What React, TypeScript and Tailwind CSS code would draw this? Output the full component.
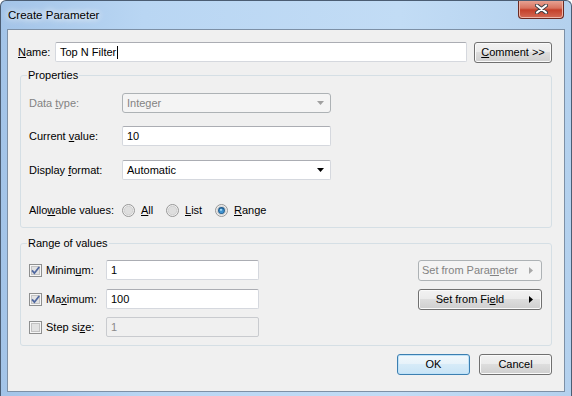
import React from 'react';

const U = ({ c }: { c: string }) => <span className="underline underline-offset-1">{c}</span>;

const btnNormal =
  'border border-[#707070] rounded-[3px] bg-[linear-gradient(to_bottom,#f2f2f2_0%,#ebebeb_48%,#dddddd_50%,#cfcfcf_100%)] shadow-[inset_0_0_0_1px_#fafafa]';
const btnDisabled = 'border border-[#adb2b5] rounded-[3px] bg-[#f4f4f4] text-[#838383]';
const btnFocused =
  'border border-[#3c7fb1] rounded-[3px] bg-[linear-gradient(to_bottom,#f2f8fc_0%,#e6f2fa_48%,#d6ebf8_50%,#c9e4f6_100%)] shadow-[inset_0_0_0_1px_#bfe2f8]';
const textBox = 'h-[20px] flex items-center bg-white pl-[4px] border border-[#d5d8de] border-t-[#abadb3] rounded-[2px]';

function Checkbox({ checked }: { checked?: boolean }) {
  return (
    <svg width="13" height="13" viewBox="0 0 13 13" className="shrink-0">
      <rect x="0.5" y="0.5" width="12" height="12" fill="#f6f6f6" stroke="#8e8f8f" />
      <rect x="2.5" y="2.5" width="8" height="8" fill="#e2e2e2" stroke="#c2c2c2" />
      {checked && <path d="M3 6.4 L5.4 9.2 L10.2 3" stroke="#5068a0" strokeWidth="1.8" fill="none" />}
    </svg>
  );
}

function Radio({ checked }: { checked?: boolean }) {
  return (
    <svg width="13" height="13" viewBox="0 0 13 13" className="shrink-0">
      <circle cx="6.5" cy="6.5" r="6" fill="#f0f0f0" stroke="#979797" />
      <circle cx="6.5" cy="6.5" r="4.3" fill="#dedede" stroke="#cacaca" strokeWidth="0.8" />
      {checked && (
        <>
          <circle cx="6.5" cy="6.5" r="3.4" fill="#1d5a8c" />
          <circle cx="6.5" cy="6.9" r="2.4" fill="#3f92cf" />
          <circle cx="6" cy="5.8" r="1.1" fill="#a9dcf7" />
        </>
      )}
    </svg>
  );
}

const Arrow = ({ color }: { color: string }) => (
  <svg width="8" height="4" viewBox="0 0 8 4">
    <path d="M0 0 H7 L3.5 4 Z" fill={color} />
  </svg>
);

const RightArrow = ({ color }: { color: string }) => (
  <svg width="4" height="7" viewBox="0 0 4 7">
    <path d="M0 0 L4 3.5 L0 7 Z" fill={color} />
  </svg>
);

export default function App() {
  return (
    <div className="w-[572px] h-[396px] overflow-hidden flex flex-col rounded-t-[6px] border border-b-0 border-[#4b5d73] bg-[linear-gradient(to_right,#a3c4e8_0%,#b9d6f3_25%,#c2dcf5_70%,#b4d1ee_100%)] font-['Liberation_Sans',Arial,sans-serif] text-[11px] text-black">
      {/* Title bar */}
      <div className="h-[28px] flex items-start justify-between shrink-0">
        <div className="pl-[7px] pt-[6px] text-[11.5px] [text-shadow:0_0_6px_#ffffff,0_0_10px_#ffffff]">Create Parameter</div>
        <div className="mr-[7px] w-[46px] h-[19px] mt-[-1px] flex items-center justify-center rounded-b-[4px] border border-t-0 border-[#6b2a22] bg-[linear-gradient(to_bottom,#e9a899_0%,#d8735f_45%,#c4402a_55%,#d36a55_100%)] shadow-[inset_0_0_0_1px_#eeb5a8]">
          <svg width="13" height="10" viewBox="0 0 13 10">
            <path d="M2 1.5 L11 8.5 M11 1.5 L2 8.5" stroke="#3b3f45" strokeWidth="4" strokeLinecap="round" />
            <path d="M2 1.5 L11 8.5 M11 1.5 L2 8.5" stroke="#ffffff" strokeWidth="2.2" strokeLinecap="round" />
          </svg>
        </div>
      </div>

      {/* Client area */}
      <div className="mx-[6px] h-[363px] shrink-0 border border-[#7d90a6] bg-[#f0f0f0] flex flex-col">
        {/* Name row */}
        <div className="flex items-start pt-[12px] pl-[10px] pr-[12px]">
          <div className="w-[37px] h-[20px] flex items-center">
            <U c="N" />ame:
          </div>
          <div className={`${textBox} w-[412px] border-[#a9c5e4] border-t-[#8fb0d6]`}>
            Top N Filter<span className="w-px h-[13px] bg-black ml-px" />
          </div>
          <div className={`${btnNormal} ml-[7px] w-[78px] h-[21px] flex items-center justify-center`}>
            <span>
              <U c="C" />omment &gt;&gt;
            </span>
          </div>
        </div>

        {/* Properties */}
        <fieldset className="mx-[12px] mt-[5px] border border-[#d5dfe5] rounded-[3px] px-[8px] pt-[11px] pb-[7px]">
          <legend className="ml-[-2px] px-[1px] leading-[14px]">Properties</legend>
          <div className="flex items-center h-[20px]">
            <div className="w-[93px] text-[#838383]">
              Data <U c="t" />ype:
            </div>
            <div className="w-[209px] h-[20px] flex items-center justify-between pl-[4px] pr-[5px] border border-[#adb2b5] rounded-[3px] bg-[#f4f4f4] text-[#838383]">
              Integer
              <Arrow color="#a0a0a0" />
            </div>
          </div>
          <div className="flex items-center h-[20px] mt-[13px]">
            <div className="w-[93px]">
              Current <U c="v" />alue:
            </div>
            <div className={`${textBox} w-[209px]`}>10</div>
          </div>
          <div className="flex items-center h-[20px] mt-[14px]">
            <div className="w-[93px]">
              Display <U c="f" />ormat:
            </div>
            <div className={`${textBox} w-[209px] justify-between pr-[5px]`}>
              Automatic
              <Arrow color="#000000" />
            </div>
          </div>
          <div className="flex items-center h-[20px] mt-[20px]">
            <div className="w-[93px]">
              Allo<U c="w" />able values:
            </div>
            <div className="w-[44px] flex items-center gap-[6px]">
              <Radio />
              <span>
                <U c="A" />ll
              </span>
            </div>
            <div className="w-[49px] flex items-center gap-[6px]">
              <Radio />
              <span>
                <U c="L" />ist
              </span>
            </div>
            <div className="flex items-center gap-[6px]">
              <Radio checked />
              <span>
                <U c="R" />ange
              </span>
            </div>
          </div>
        </fieldset>

        {/* Range of values */}
        <fieldset className="mx-[12px] mt-[8px] border border-[#d5dfe5] rounded-[3px] pl-[8px] pr-[9px] pt-[10px] pb-[8px]">
          <legend className="ml-[-2px] px-[1px] leading-[14px]">Range of values</legend>
          <div className="flex justify-between">
            <div className="flex flex-col">
              <div className="flex items-center h-[20px]">
                <div className="w-[77px] flex items-center gap-[4px]">
                  <Checkbox checked />
                  <span>
                    Minim<U c="u" />m:
                  </span>
                </div>
                <div className={`${textBox} w-[153px]`}>1</div>
              </div>
              <div className="flex items-center h-[20px] mt-[9px]">
                <div className="w-[77px] flex items-center gap-[4px]">
                  <Checkbox checked />
                  <span>
                    Ma<U c="x" />imum:
                  </span>
                </div>
                <div className={`${textBox} w-[153px]`}>100</div>
              </div>
              <div className="flex items-center h-[20px] mt-[8px]">
                <div className="w-[77px] flex items-center gap-[4px]">
                  <Checkbox />
                  <span>
                    Step si<U c="z" />e:
                  </span>
                </div>
                <div className="w-[153px] h-[20px] flex items-center pl-[4px] border border-[#c9cbcf] bg-[#f0f0f0] text-[#8a8a8a] rounded-[2px]">
                  1
                </div>
              </div>
            </div>
            <div className="flex flex-col gap-[8px]">
              <div className={`${btnDisabled} w-[124px] h-[21px] flex items-center`}>
                <span className="flex-1 text-center">
                  Set from Para<U c="m" />eter
                </span>
                <span className="w-[20px] flex justify-center">
                  <RightArrow color="#a8a8a8" />
                </span>
              </div>
              <div className={`${btnNormal} w-[124px] h-[21px] flex items-center`}>
                <span className="flex-1 text-center">
                  Set from Fi<U c="e" />ld
                </span>
                <span className="w-[20px] flex justify-center">
                  <RightArrow color="#000000" />
                </span>
              </div>
            </div>
          </div>
        </fieldset>

        {/* Buttons */}
        <div className="flex justify-end gap-[9px] mt-[8px] pr-[12px]">
          <div className={`${btnFocused} w-[73px] h-[21px] flex items-center justify-center`}>OK</div>
          <div className={`${btnNormal} w-[73px] h-[21px] flex items-center justify-center`}>Cancel</div>
        </div>
      </div>
    </div>
  );
}
